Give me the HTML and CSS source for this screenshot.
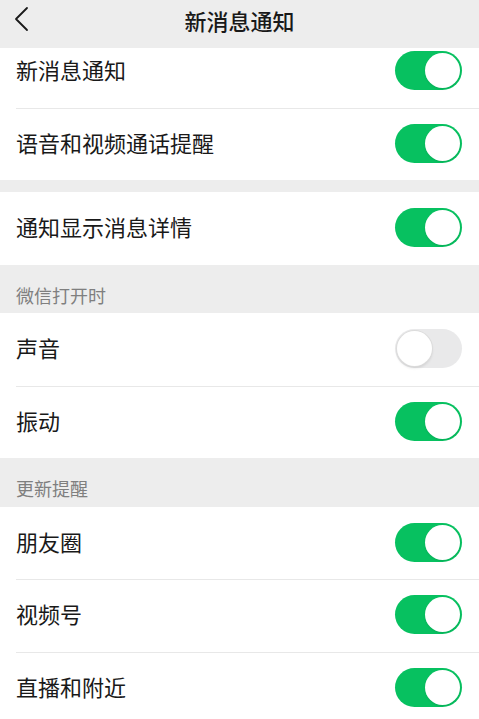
FILE: index.html
```html
<!DOCTYPE html>
<html lang="zh-CN">
  <head>
    <meta charset="UTF-8" />
    <meta name="viewport" content="width=device-width, initial-scale=1.0" />
    <title>新消息通知</title>
    <link rel="stylesheet" href="styles.css">
  </head>
  <body>
    <div class="navbar">
      <span class="back">
        <svg width="16" height="26" viewBox="0 0 16 26">
          <polyline points="13,2 2,13 13,24" fill="none" stroke="#1a1a1a" stroke-width="1.8" stroke-linecap="round" stroke-linejoin="round" />
        </svg>
      </span>
      <div class="title">新消息通知</div>
    </div>

    <div class="content">
      <div class="group">
        <div class="cell first">
          <span class="label">新消息通知</span>
          <span class="switch on"></span>
        </div>
        <div class="cell">
          <span class="label">语音和视频通话提醒</span>
          <span class="switch on"></span>
        </div>
      </div>

      <div class="gap"></div>

      <div class="group">
        <div class="cell">
          <span class="label">通知显示消息详情</span>
          <span class="switch on"></span>
        </div>
      </div>

      <div class="section-title">微信打开时</div>
      <div class="group">
        <div class="cell">
          <span class="label">声音</span>
          <span class="switch"></span>
        </div>
        <div class="cell">
          <span class="label">振动</span>
          <span class="switch on"></span>
        </div>
      </div>

      <div class="section-title">更新提醒</div>
      <div class="group">
        <div class="cell">
          <span class="label">朋友圈</span>
          <span class="switch on"></span>
        </div>
        <div class="cell">
          <span class="label">视频号</span>
          <span class="switch on"></span>
        </div>
        <div class="cell">
          <span class="label">直播和附近</span>
          <span class="switch on"></span>
        </div>
      </div>
    </div>
  </body>
</html>
```

FILE: styles.css
```css
body,
html {
  margin: 0;
  height: 100%;
  overflow: hidden;
  background: #ededed;
  font-family: "Noto Sans CJK SC", "Noto Sans", sans-serif;
  color: #191919;
}
.navbar {
  position: relative;
  z-index: 2;
  height: 48px;
  background: #ededed;
  display: flex;
  align-items: center;
  justify-content: center;
}
.back {
  position: absolute;
  left: 14px;
  top: 6px;
  display: flex;
}
.title {
  font-size: 22px;
  font-weight: 500;
  line-height: 40px;
  margin-top: -9px;
}
.content {
  margin-top: -13px;
}
.group {
  background: #fff;
}
.cell {
  height: 72.5px;
  padding: 0 17px 0 16px;
  display: flex;
  align-items: center;
  justify-content: space-between;
  position: relative;
  box-sizing: border-box;
}
.cell + .cell::before {
  content: "";
  position: absolute;
  left: 16px;
  right: 0;
  top: 0;
  height: 1px;
  background: #e8e8e8;
}
.label {
  font-size: 22px;
  line-height: 30px;
  margin-top: -4px;
}
.switch {
  width: 67px;
  height: 39px;
  border-radius: 20px;
  background: #e9e9ea;
  position: relative;
  box-sizing: border-box;
  margin-top: -1px;
}
.gap {
  height: 12px;
}
.section-title {
  height: 48.5px;
  box-sizing: border-box;
  padding: 17px 16px 0;
  font-size: 18px;
  line-height: 26px;
  color: #7f7f7f;
}
.switch::after {
  content: "";
  position: absolute;
  top: 2px;
  left: 2px;
  width: 35px;
  height: 35px;
  border-radius: 50%;
  background: #fff;
  box-shadow: 0 0 0 1px #dcdcdc, 0 2px 3px rgba(0, 0, 0, 0.12);
}
.switch.on {
  background: #07c160;
}
.switch.on::after {
  left: auto;
  right: 2px;
  box-shadow: 0 1px 2px rgba(0, 0, 0, 0.1);
}
```
